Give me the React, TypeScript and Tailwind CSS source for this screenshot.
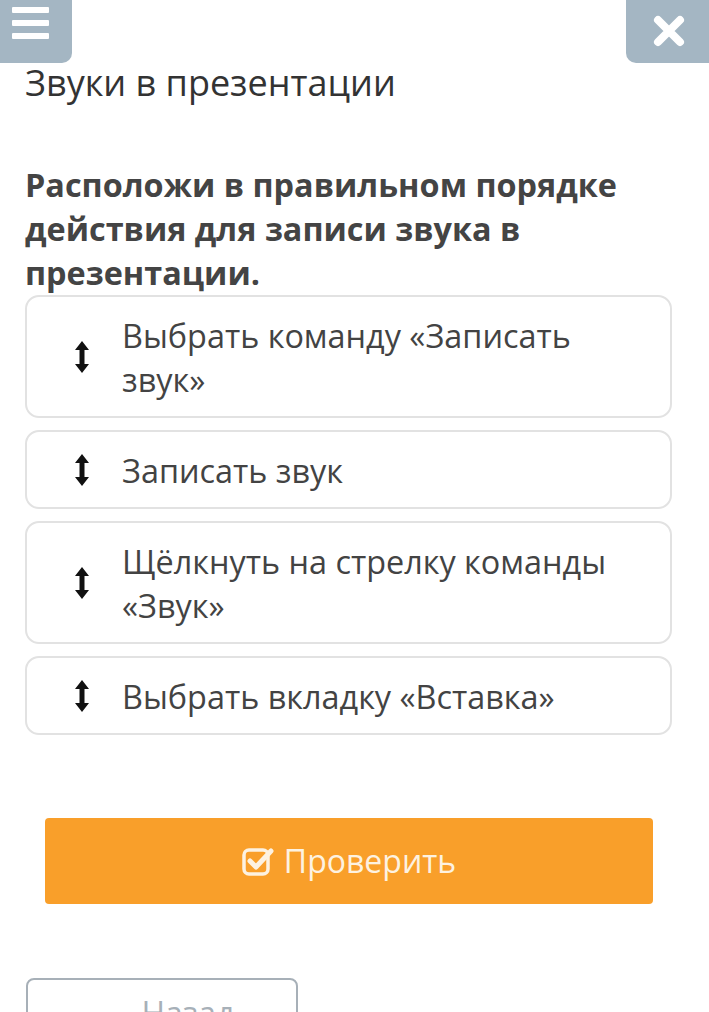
import React from "react";

function Arrow() {
  return (
    <svg width="16" height="34" viewBox="0 0 16 34" className="shrink-0">
      <path d="M8 1 L15 10 H10.5 V24 H15 L8 33 L1 24 H5.5 V10 H1 Z" fill="#111" />
    </svg>
  );
}

const items = [
  "Выбрать команду «Записать звук»",
  "Записать звук",
  "Щёлкнуть на стрелку команды «Звук»",
  "Выбрать вкладку «Вставка»",
];

export default function App() {
  return (
    <div
      className="relative w-[709px] h-[1012px] overflow-hidden bg-white"
      style={{ fontFamily: "'Open Sans', 'Noto Sans', sans-serif" }}
    >
      <div className="absolute left-0 top-0 w-[72px] h-[63px] bg-[#a4b6c3] rounded-br-[10px] flex flex-col gap-[7px] pl-[12px] pt-[7px]">
        <div className="w-[37px] h-[6px] bg-white rounded-[1px]" />
        <div className="w-[37px] h-[6px] bg-white rounded-[1px]" />
        <div className="w-[37px] h-[6px] bg-white rounded-[1px]" />
      </div>
      <div className="absolute right-0 top-0 w-[83px] h-[63px] bg-[#a4b6c3] rounded-bl-[10px] flex items-center justify-center pb-[2px] pl-[2px]">
        <svg width="32" height="32" viewBox="0 0 32 32">
          <path d="M5 5 L27 27 M27 5 L5 27" stroke="white" strokeWidth="8" strokeLinecap="round" />
        </svg>
      </div>

      <div className="px-[25px] pt-[60px]">
        <h1 className="text-[36px] leading-[46px] text-[#333] font-normal">Звуки в презентации</h1>
        <p className="mt-[56px] text-[32.4px] leading-[44px] font-bold text-[#444]">
          Расположи в правильном порядке действия для записи звука в презентации.
        </p>
        <div className="mt-[1px] flex flex-col gap-[12px] w-[647px]">
          {items.map((t) => (
            <div
              key={t}
              className="flex items-center border-2 border-[#e2e2e2] rounded-[14px] py-[15.5px] pl-[47px] pr-[30px]"
            >
              <Arrow />
              <div className="ml-[32px] text-[32.4px] leading-[44px] text-[#434343]">{t}</div>
            </div>
          ))}
        </div>
        <div className="mt-[83px] ml-[20px] w-[608px] h-[86px] bg-[#f99f2a] rounded-[4px] flex items-center justify-center gap-[10px] text-[#fdf2e1]">
          <svg width="32" height="32" viewBox="0 0 32 32">
            <rect x="2" y="5" width="24" height="24" rx="5" fill="none" stroke="#fdf2e1" strokeWidth="3.5" />
            <path d="M8 16 L14 22 L29 6" fill="none" stroke="#fdf2e1" strokeWidth="5" strokeLinecap="round" strokeLinejoin="round" />
          </svg>
          <span className="text-[32px]">Проверить</span>
        </div>
        <div className="mt-[74px] ml-[1px] w-[272px] h-[70px] border-2 border-[#a7b0b8] rounded-[8px] flex items-center justify-center gap-[20px] text-[#a7b0b8] text-[32px]">
          <span>←</span>
          <span>Назад</span>
        </div>
      </div>
    </div>
  );
}
